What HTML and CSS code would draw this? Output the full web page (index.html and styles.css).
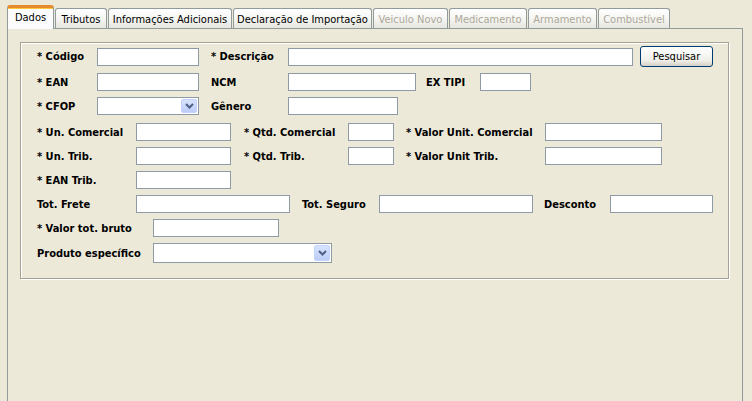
FILE: index.html
```html
<!DOCTYPE html>
<html lang="pt">
<head>
<meta charset="utf-8">
<title>Produto</title>
<link rel="stylesheet" href="styles.css">
</head>
<body>
<div class="tabs">
  <div class="tabbar">
    <div class="tab sel t1">Dados</div>
    <div class="tab t2">Tributos</div>
    <div class="tab t3">Informações Adicionais</div>
    <div class="tab t4">Declaração de Importação</div>
    <div class="tab dis t5">Veiculo Novo</div>
    <div class="tab dis t6">Medicamento</div>
    <div class="tab dis t7">Armamento</div>
    <div class="tab dis t8">Combustível</div>
  </div>
  <div class="panel">
    <div class="group">
      <div class="row r1">
        <span class="lbl w60">* Código</span>
        <span class="inp w102"></span>
        <span class="lbl w77 ml12">* Descrição</span>
        <span class="inp w345"></span>
        <button class="btn">Pesquisar</button>
      </div>
      <div class="row">
        <span class="lbl w60">* EAN</span>
        <span class="inp w102"></span>
        <span class="lbl w77 ml12">NCM</span>
        <span class="inp w128"></span>
        <span class="lbl w54 ml10">EX TIPI</span>
        <span class="inp w51"></span>
      </div>
      <div class="row">
        <span class="lbl w60">* CFOP</span>
        <span class="combo w102"><span class="arrow"><svg width="9" height="6" viewBox="0 0 9 6"><path d="M1 1 L4.5 4.5 L8 1" fill="none" stroke="#4d6185" stroke-width="2"/></svg></span></span>
        <span class="lbl w77 ml12">Gênero</span>
        <span class="inp w110"></span>
      </div>
      <div class="row mt8">
        <span class="lbl w99">* Un. Comercial</span>
        <span class="inp w95"></span>
        <span class="lbl w104 ml13">* Qtd. Comercial</span>
        <span class="inp w46"></span>
        <span class="lbl w139 ml12">* Valor Unit. Comercial</span>
        <span class="inp w117"></span>
      </div>
      <div class="row">
        <span class="lbl w99">* Un. Trib.</span>
        <span class="inp w95"></span>
        <span class="lbl w104 ml13">* Qtd. Trib.</span>
        <span class="inp w46"></span>
        <span class="lbl w139 ml12">* Valor Unit Trib.</span>
        <span class="inp w117"></span>
      </div>
      <div class="row">
        <span class="lbl w99">* EAN Trib.</span>
        <span class="inp w95"></span>
      </div>
      <div class="row">
        <span class="lbl w99">Tot. Frete</span>
        <span class="inp w154"></span>
        <span class="lbl w77 ml12">Tot. Seguro</span>
        <span class="inp w154"></span>
        <span class="lbl w66 ml11">Desconto</span>
        <span class="inp w103"></span>
      </div>
      <div class="row">
        <span class="lbl w116">* Valor tot. bruto</span>
        <span class="inp w126"></span>
      </div>
      <div class="row r9">
        <span class="lbl w116">Produto específico</span>
        <span class="combo w179 h20"><span class="arrow"><svg width="9" height="6" viewBox="0 0 9 6"><path d="M1 1 L4.5 4.5 L8 1" fill="none" stroke="#4d6185" stroke-width="2"/></svg></span></span>
      </div>
    </div>
  </div>
</div>
</body>
</html>
```
FILE: styles.css
```css
html, body {
  margin: 0;
  padding: 0;
  background: #ece9d8;
  overflow: hidden;
}
body {
  font-family: "DejaVu Sans Condensed", "DejaVu Sans", sans-serif;
  font-size: 11px;
  color: #000;
  width: 752px;
  height: 401px;
}
.tabs {
  padding-top: 5px;
}
.tabbar {
  display: flex;
  align-items: flex-end;
  height: 23px;
  padding-left: 7px;
}
.tab {
  box-sizing: border-box;
  height: 20px;
  margin-right: 1px;
  border: 1px solid #919b9c;
  border-bottom: none;
  border-radius: 3px 3px 0 0;
  background: linear-gradient(#ffffff, #f3f3ef 60%, #e6e5df);
  display: flex;
  align-items: center;
  justify-content: center;
  line-height: 13px;
  padding-top: 1px;
  white-space: nowrap;
}
.tab.sel {
  height: 24px;
  margin-bottom: -1px;
  position: relative;
  z-index: 2;
  background: #fcfcfe;
  border-top: 3px solid #ffc83c;
  border-top-color: #e68b2c;
  box-shadow: inset 0 1px 0 #ffc83c;
  padding-top: 0;
  padding-bottom: 3px;
}
.tab.dis { color: #aca899; }
.t1 { width: 47px; }
.t2 { width: 52px; }
.t3 { width: 124px; }
.t4 { width: 139px; }
.t5 { width: 75px; }
.t6 { width: 78px; }
.t7 { width: 69px; }
.t8 { width: 72px; }

.panel {
  box-sizing: border-box;
  margin-left: 7px;
  width: 736px;
  height: 390px;
  border: 1px solid #919b9c;
  padding: 13px 0 0 12px;
  position: relative;
  z-index: 1;
}
.group {
  box-sizing: border-box;
  width: 709px;
  height: 237px;
  border: 1px solid #a5a294;
  box-shadow: inset 1px 1px 0 #fff, 1px 1px 0 #fff;
  padding: 3px 0 0 16px;
  display: flex;
  flex-direction: column;
  gap: 6px;
}
.row {
  display: flex;
  align-items: center;
  height: 18px;
}
.row.r1 { height: 21px; }
.row.r9 { height: 20px; }
.row.mt8 { margin-top: 2px; }

.lbl {
  font-weight: bold;
  line-height: 13px;
  white-space: nowrap;
  flex: none;
}
.inp, .combo {
  box-sizing: border-box;
  height: 18px;
  background: #fff;
  border: 1px solid #8e9aa5;
  flex: none;
}
.combo {
  display: flex;
  justify-content: flex-end;
  padding: 1px;
}
.combo.h20 { height: 20px; }
.arrow {
  box-sizing: border-box;
  width: 16px;
  height: 100%;
  border-radius: 2px;
  border: 1px solid #c3d3fd;
  background: linear-gradient(#d7e2fd, #bccdf8);
  display: flex;
  align-items: center;
  justify-content: center;
}
.btn {
  box-sizing: border-box;
  width: 73px;
  height: 21px;
  margin-left: 7px;
  border: 1px solid #003c74;
  border-radius: 3px;
  background: linear-gradient(#ffffff, #f0f0ea 70%, #d6d0c5);
  font: inherit;
  font-weight: normal;
  color: #000;
  padding: 0;
  flex: none;
}
.w46 { width: 46px; }
.w51 { width: 51px; }
.w54 { width: 54px; }
.w60 { width: 60px; }
.w66 { width: 66px; }
.w77 { width: 77px; }
.w95 { width: 95px; }
.w99 { width: 99px; }
.w102 { width: 102px; }
.w103 { width: 103px; }
.w104 { width: 104px; }
.w110 { width: 110px; }
.w116 { width: 116px; }
.w117 { width: 117px; }
.w126 { width: 126px; }
.w128 { width: 128px; }
.w139 { width: 139px; }
.w154 { width: 154px; }
.w179 { width: 179px; }
.w345 { width: 345px; }
.ml10 { margin-left: 10px; }
.ml11 { margin-left: 11px; }
.ml12 { margin-left: 12px; }
.ml13 { margin-left: 13px; }
```
